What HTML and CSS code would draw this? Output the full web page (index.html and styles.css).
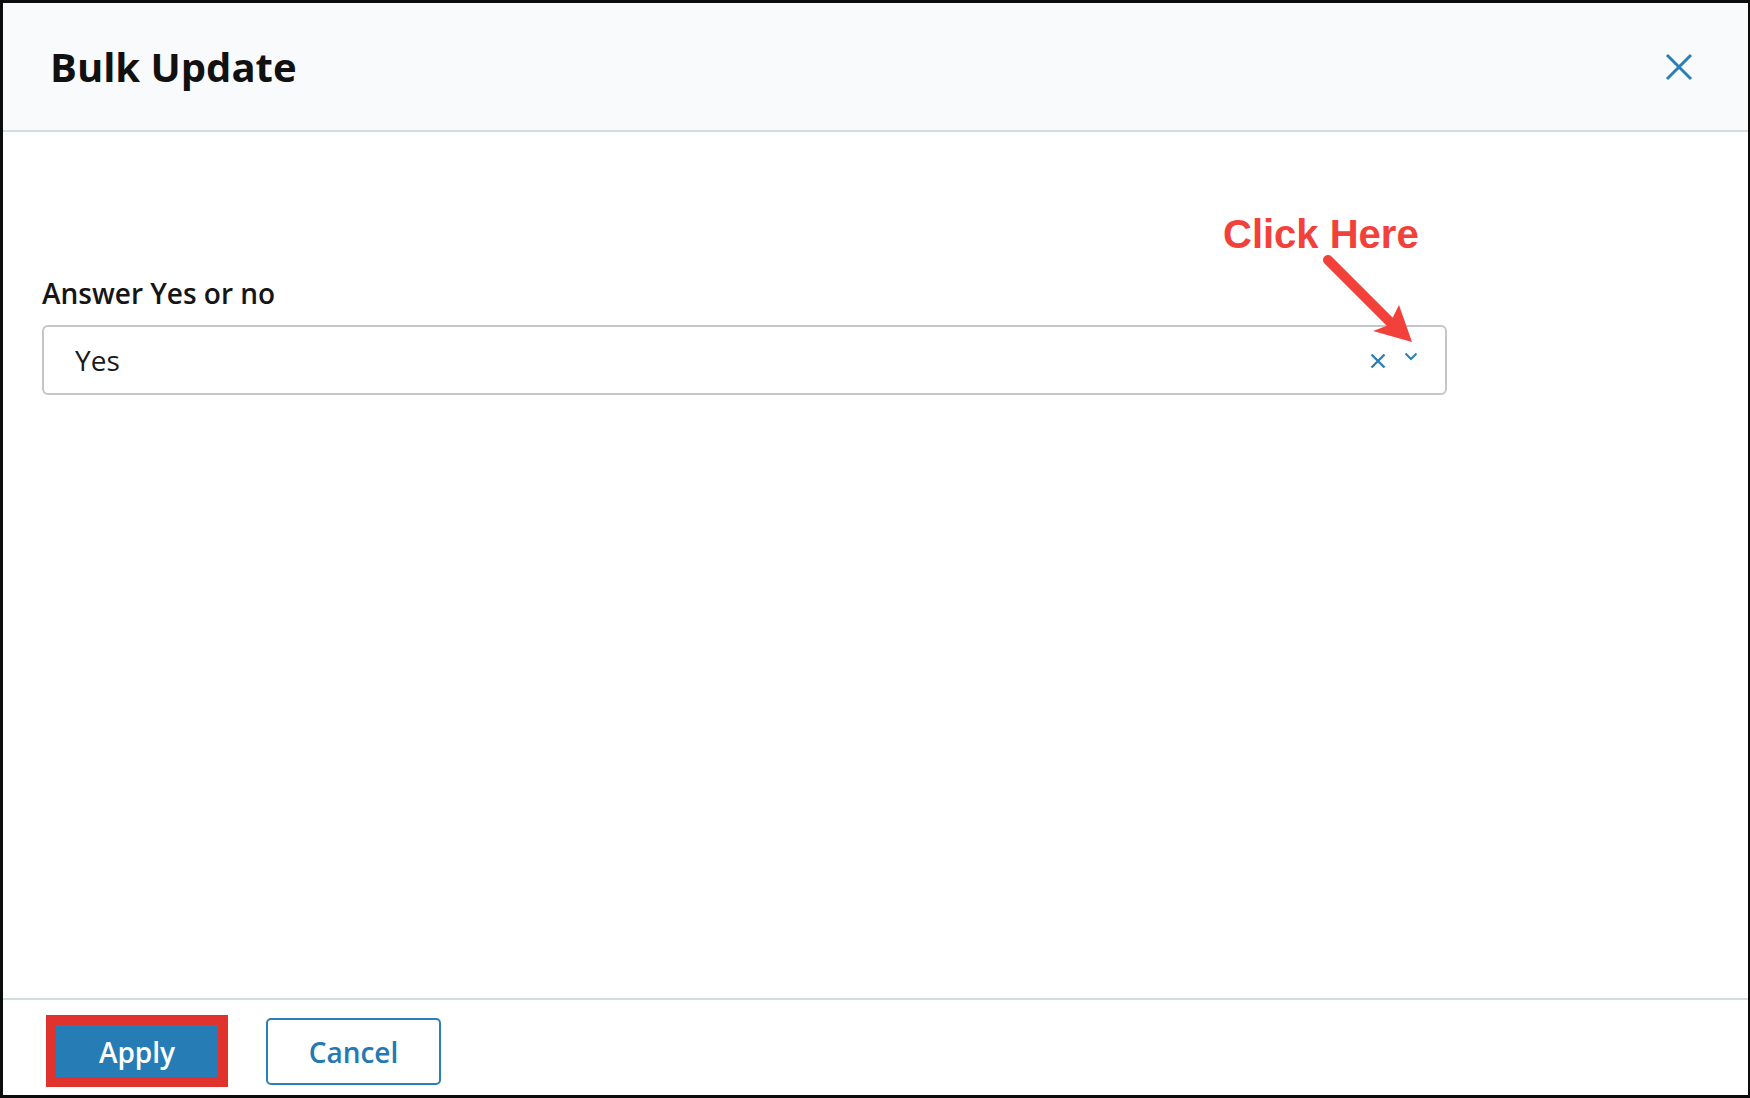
FILE: index.html
```html
<!DOCTYPE html>
<html lang="en">
<head>
<meta charset="utf-8">
<title>Bulk Update</title>
<link rel="stylesheet" href="styles.css">
</head>
<body>
<div class="dialog">
  <header class="dialog-header">
    <h1 class="dialog-title">Bulk Update</h1>
    <button class="close-btn" aria-label="Close">
      <svg width="28" height="28" viewBox="0 0 28 28"><path d="M2 2 L26 26 M26 2 L2 26" stroke="#2a7fb8" stroke-width="3" fill="none"/></svg>
    </button>
  </header>
  <main class="dialog-body">
    <label class="field-label">Answer Yes or no</label>
    <div class="select-box">
      <span class="select-value">Yes</span>
      <span class="select-clear">
        <svg width="16" height="16" viewBox="0 0 16 16"><path d="M1.5 1.5 L14.5 14.5 M14.5 1.5 L1.5 14.5" stroke="#2a7fb8" stroke-width="2.4" fill="none"/></svg>
      </span>
      <span class="select-arrow">
        <svg width="14" height="9" viewBox="0 0 14 9"><path d="M1.5 1.5 L7 7 L12.5 1.5" stroke="#2a7fb8" stroke-width="2" fill="none"/></svg>
      </span>
    </div>
  </main>
  <footer class="dialog-footer">
    <span class="highlight">
      <button class="btn btn-primary">Apply</button>
    </span>
    <button class="btn btn-outline">Cancel</button>
  </footer>
</div>
<div class="annotation-text">Click Here</div>
<svg class="annotation-arrow" width="110" height="105" viewBox="0 0 110 105">
  <path d="M13 12 L77 76" stroke="#f2413a" stroke-width="10" stroke-linecap="round" fill="none"/>
  <polygon points="84,57 97,94 58,83 74,77" fill="#f2413a"/>
</svg>
</body>
</html>
```
FILE: styles.css
```css
* { box-sizing: border-box; }
html, body { margin: 0; padding: 0; }
body {
  background: #0c0c0c;
  width: 1750px;
  height: 1098px;
  overflow: hidden;
  font-family: "Open Sans", "Noto Sans", sans-serif;
  padding: 3px 2px 3px 3px;
}
.dialog {
  background: #ffffff;
  height: 100%;
  display: flex;
  flex-direction: column;
}
.dialog-header {
  height: 129px;
  flex: none;
  background: #f8fafb;
  border-bottom: 2px solid #d3dcdf;
  display: flex;
  align-items: center;
  justify-content: space-between;
  padding: 0 55px 0 47px;
}
.dialog-title {
  margin: 0;
  font-size: 40px;
  font-weight: 700;
  color: #111111;
  line-height: 1;
  padding-top: 0;
}
.close-btn {
  background: none;
  border: 0;
  padding: 0;
  width: 28px;
  height: 28px;
  display: flex;
  cursor: pointer;
}
.dialog-body {
  flex: 1;
  padding: 142px 0 0 39px;
}
.field-label {
  display: block;
  font-size: 28px;
  font-weight: 600;
  line-height: 38px;
  color: #151515;
  margin-bottom: 13px;
}
.select-box {
  width: 1405px;
  height: 70px;
  border: 2px solid #c6c6c6;
  border-radius: 6px;
  display: flex;
  align-items: center;
  padding: 0 27px 0 31px;
}
.select-value {
  flex: 1;
  font-size: 28px;
  color: #1a1a1a;
}
.select-clear {
  display: flex;
  margin-right: 18px;
  margin-top: 1px;
}
.select-arrow {
  display: flex;
  margin-top: -7px;
}
.dialog-footer {
  flex: none;
  height: 97px;
  border-top: 2px solid #d3dcdf;
  display: flex;
  align-items: center;
  gap: 38px;
  padding: 7px 0 0 43px;
}
.highlight {
  display: inline-flex;
  border: 10px solid #e0332e;
}
.btn {
  font-family: "Open Sans", "Noto Sans", sans-serif;
  font-size: 28px;
  font-weight: 600;
  cursor: pointer;
}
.btn-primary {
  width: 162px;
  height: 52px;
  background: #267db5;
  color: #ffffff;
  border: 0;
  padding: 2px 0 0;
}
.btn-outline {
  width: 175px;
  height: 67px;
  background: #ffffff;
  color: #2479b3;
  border: 2px solid #2a7fb8;
  border-radius: 5px;
  padding: 2px 0 0;
}
.annotation-text {
  position: absolute;
  left: 1223px;
  top: 214px;
  font-family: "Liberation Sans", Arial, sans-serif;
  font-weight: 700;
  font-size: 40px;
  line-height: 40px;
  color: #f2413a;
  white-space: nowrap;
}
.annotation-arrow {
  position: absolute;
  left: 1315px;
  top: 248px;
}
```
